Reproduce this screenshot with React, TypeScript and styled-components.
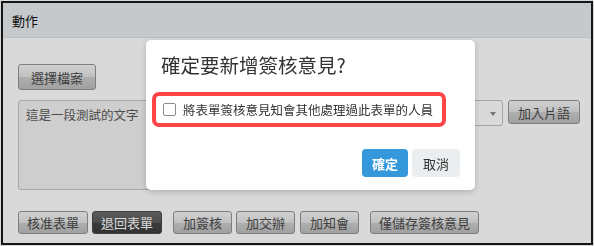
import React from 'react';
import styled, {createGlobalStyle, css} from "styled-components";

const GlobalStyle = createGlobalStyle`
    html, body {
        margin: 0;
        padding: 0;
        background: #fff;
        font-family: "Noto Sans CJK TC", "Liberation Sans", sans-serif;
    }
`

const PageWrapper = styled.div`
    padding: 1px;
    width: 594px;
    height: 246px;
    box-sizing: border-box;
`

const Frame = styled.div`
    border: 2px solid #1a1a1a;
    height: 244px;
    box-sizing: border-box;
    background: #fff;
    display: flex;
    flex-direction: column;
`

const Header = styled.div`
    height: 34px;
    background: #e9edf0;
    border-bottom: 1px solid #dde1e4;
    display: flex;
    align-items: center;
    padding-left: 9px;
    font-size: 13px;
    color: #111;
`

const Body = styled.div`
    padding: 26px 11px 0 15px;
    display: flex;
    flex-direction: column;
    align-items: flex-start;
`

const GreyButton = styled.button<{ $dark?: boolean; $gap?: number; $h?: number; $px?: number }>`
    height: ${p => p.$h ?? 23}px;
    padding: 0 ${p => p.$px ?? 8}px;
    margin-left: ${p => p.$gap ?? 0}px;
    font-family: inherit;
    font-size: 13px;
    line-height: 1;
    border-radius: 3px;
    border: 1px solid #959595;
    color: #4a4a4a;
    background: linear-gradient(#f6f6f6, #e2e2e2 50%, #cdcdcd 52%, #bdbdbd);
    box-sizing: border-box;
    white-space: nowrap;
    ${p => p.$dark && css`
        border-color: #4a4a4a;
        color: #fff;
        background: linear-gradient(#6a6a6a, #5a5a5a 50%, #434343 52%, #3e3e3e);
    `}
`

const InputRow = styled.div`
    margin-top: 10px;
    display: flex;
    align-items: flex-start;
    width: 100%;
`

const TextArea = styled.div`
    width: 322px;
    height: 90px;
    box-sizing: border-box;
    background: #f2f2f2;
    border: 1px solid #c4c4c4;
    border-radius: 3px;
    padding: 4px 7px;
    font-size: 12.5px;
    color: #5a5a5a;
`

const Select = styled.div`
    margin-left: 3px;
    width: 160px;
    height: 26px;
    box-sizing: border-box;
    border: 1px solid #c2c2c2;
    border-radius: 3px;
    background: #fff;
    display: flex;
    align-items: center;
    justify-content: flex-end;
    padding-right: 6px;
`

const Caret = styled.span`
    width: 0;
    height: 0;
    border-left: 3px solid transparent;
    border-right: 3px solid transparent;
    border-top: 4px solid #8a8a8a;
    margin-top: 1px;
`

const ButtonRow = styled.div`
    margin-top: 21px;
    display: flex;
`

const Backdrop = styled.div`
    position: fixed;
    inset: 0;
    background: rgba(0, 0, 0, 0.15);
`

const Modal = styled.div`
    position: absolute;
    left: 146px;
    top: 40px;
    width: 329px;
    height: 150px;
    box-sizing: border-box;
    background: #fff;
    border-radius: 5px;
    box-shadow: 0 2px 6px rgba(0, 0, 0, 0.18);
    padding-top: 12px;
`

const Title = styled.div`
    padding-left: 15px;
    font-size: 19.5px;
    line-height: 26px;
    color: #333;
`

const HighlightLabel = styled.label`
    margin: 14px 0 0 6px;
    display: inline-flex;
    align-items: center;
    gap: 7px;
    height: 35px;
    box-sizing: border-box;
    border: 4px solid #ff4646;
    border-radius: 7px;
    padding: 0 9px 0 7px;
    font-size: 12.5px;
    color: #333;
`

const CheckBox = styled.span`
    width: 13px;
    height: 13px;
    box-sizing: border-box;
    border: 1px solid #8a8a8a;
    border-radius: 2px;
    background: #fff;
`

const Footer = styled.div`
    margin-top: 22px;
    padding-right: 15px;
    display: flex;
    justify-content: flex-end;
    gap: 4px;
`

const ModalButton = styled.button<{ $primary?: boolean }>`
    height: 28px;
    padding: 0 ${p => p.$primary ? 10 : 11}px;
    border: none;
    border-radius: 4px;
    font-family: inherit;
    font-size: 13px;
    font-weight: ${p => p.$primary ? 700 : 400};
    color: ${p => p.$primary ? '#fff' : '#333'};
    background: ${p => p.$primary ? '#3498db' : '#ebeef0'};
`

export default function App() {
    return (
        <PageWrapper>
            <GlobalStyle/>
            <Frame>
                <Header>動作</Header>
                <Body>
                    <GreyButton $h={26} $px={12}>選擇檔案</GreyButton>
                    <InputRow>
                        <TextArea>這是一段測試的文字</TextArea>
                        <Select><Caret/></Select>
                        <GreyButton $gap={5} $h={24} $px={9}>加入片語</GreyButton>
                    </InputRow>
                    <ButtonRow>
                        <GreyButton $px={8}>核准表單</GreyButton>
                        <GreyButton $dark $gap={4} $px={8}>退回表單</GreyButton>
                        <GreyButton $gap={11} $px={9}>加簽核</GreyButton>
                        <GreyButton $gap={4} $px={9}>加交辦</GreyButton>
                        <GreyButton $gap={5} $px={9}>加知會</GreyButton>
                        <GreyButton $gap={11} $px={8}>僅儲存簽核意見</GreyButton>
                    </ButtonRow>
                </Body>
            </Frame>
            <Backdrop/>
            <Modal>
                <Title>確定要新增簽核意見?</Title>
                <HighlightLabel>
                    <CheckBox/>
                    將表單簽核意見知會其他處理過此表單的人員
                </HighlightLabel>
                <Footer>
                    <ModalButton $primary>確定</ModalButton>
                    <ModalButton>取消</ModalButton>
                </Footer>
            </Modal>
        </PageWrapper>
    );
}
